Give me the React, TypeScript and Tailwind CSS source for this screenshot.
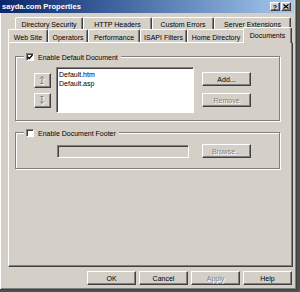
import React from "react";

const raised =
  "bg-[#d4d0c8] border border-t-white border-l-white border-r-[#404040] border-b-[#404040] shadow-[inset_-1px_-1px_0_#808080]";
const sunken =
  "border border-t-[#808080] border-l-[#808080] border-r-white border-b-white shadow-[inset_1px_1px_0_#404040]";
const disabledText = "text-[#808080] [text-shadow:1px_1px_0_#ffffff]";

function Button({
  label,
  w,
  disabled,
}: {
  label: string;
  w: string;
  disabled?: boolean;
}) {
  return (
    <div
      className={`${raised} ${w} h-[14px] flex items-center justify-center pt-[1px] ${
        disabled ? disabledText : "text-black"
      }`}
    >
      {label}
    </div>
  );
}

function Checkbox({ checked }: { checked?: boolean }) {
  return (
    <div className={`${sunken} w-[8px] h-[8px] bg-white flex items-center justify-center`}>
      {checked && (
        <svg width="6" height="6" viewBox="0 0 6 6">
          <path d="M0.5 2.8 L2.2 4.5 L5.5 1" stroke="#000" strokeWidth="1.3" fill="none" />
        </svg>
      )}
    </div>
  );
}

function ArrowBtn({ down }: { down?: boolean }) {
  const d = down
    ? "M4 1.5 V8.5 M1.8 6.2 L4 8.5 L6.2 6.2 M2.5 1.5 H5.5"
    : "M4 8.5 V1.5 M1.8 3.8 L4 1.5 L6.2 3.8 M2.5 8.5 H5.5";
  return (
    <div className={`${raised} w-[17px] h-[15px] flex items-center justify-center`}>
      <svg width="9" height="11" viewBox="0 0 9 11">
        <g transform="translate(1,1)">
          <path d={d} stroke="#ffffff" strokeWidth="1" fill="none" />
        </g>
        <path d={d} stroke="#808080" strokeWidth="1" fill="none" />
      </svg>
    </div>
  );
}

function Tab({ label, w, back }: { label: string; w: string; back?: boolean }) {
  return (
    <div
      className={`${w} h-full flex items-center justify-center ${
        back ? "pt-[2px]" : "pt-[3px]"
      } border-t border-l border-r border-t-white border-l-white border-r-[#404040] rounded-t-[2px] shadow-[inset_-1px_0_0_#808080] text-black`}
    >
      {label}
    </div>
  );
}

function Group({
  label,
  checked,
  className,
  children,
}: {
  label: string;
  checked?: boolean;
  className?: string;
  children: React.ReactNode;
}) {
  return (
    <fieldset
      className={`w-[265px] border border-[#808080] shadow-[1px_1px_0_#ffffff,inset_1px_1px_0_#ffffff] ${className ?? ""}`}
    >
      <legend className="ml-[8px] px-[2px] bg-[#d4d0c8] h-[9px] flex items-center gap-[4px]">
        <Checkbox checked={checked} />
        <span className="pt-[1px] pr-[1px]">{label}</span>
      </legend>
      {children}
    </fieldset>
  );
}

export default function App() {
  return (
    <div className="w-[300px] h-[292px] bg-[#4a524c] [font-family:'Liberation_Sans',Arial,sans-serif] text-[7px] leading-none">
      <div className="w-[297px] h-[290px] bg-[#d4d0c8] flex flex-col border-r border-b border-r-[#404040] border-b-[#404040] shadow-[inset_-1px_-1px_0_#808080]">
        {/* Title bar */}
        <div className="w-[294px] h-[13px] shrink-0 bg-gradient-to-r from-[#0a246a] to-[#a6caf0] flex items-center pl-[2px] pr-[3px]">
          <span className="text-white font-bold text-[7.6px] pt-[1px]">sayda.com Properties</span>
          <div className="ml-auto flex gap-[1px]">
            <div className={`${raised} w-[10px] h-[9px] flex items-center justify-center font-bold text-black text-[7px] pt-[1px]`}>
              ?
            </div>
            <div className={`${raised} w-[10px] h-[9px] flex items-center justify-center`}>
              <svg width="6" height="5" viewBox="0 0 6 5">
                <path d="M0.5 0.5 L5.5 4.5 M5.5 0.5 L0.5 4.5" stroke="#000" strokeWidth="1.2" />
              </svg>
            </div>
          </div>
        </div>

        {/* Body */}
        <div className="flex-1 flex flex-col pl-[8px] pr-[3px] pb-[4px] shadow-[inset_1px_0_0_#ffffff]">
          {/* back row tabs */}
          <div className="mt-[4px] h-[12px] flex ml-[7px]">
            <Tab back label="Directory Security" w="w-[68px]" />
            <Tab back label="HTTP Headers" w="w-[69px]" />
            <Tab back label="Custom Errors" w="w-[62px]" />
            <Tab back label="Server Extensions" w="w-[77px]" />
          </div>
          {/* front row tabs */}
          <div className="h-[13px] flex">
            <Tab label="Web Site" w="w-[40px]" />
            <Tab label="Operators" w="w-[40px]" />
            <Tab label="Performance" w="w-[52px]" />
            <Tab label="ISAPI Filters" w="w-[47px]" />
            <Tab label="Home Directory" w="w-[58px]" />
            <div className="relative z-10 w-[49px] h-[16px] -mt-[2px] -ml-[2px] bg-[#d4d0c8] flex items-center justify-center pb-[1px] border-t border-l border-r border-t-white border-l-white border-r-[#404040] rounded-t-[2px] shadow-[inset_-1px_0_0_#808080] text-black">
              Documents
            </div>
          </div>

          {/* Panel */}
          <div className="h-[225px] border border-t-white border-l-white border-r-[#404040] border-b-[#404040] shadow-[inset_-1px_-1px_0_#808080] pt-[9px] pl-[6px]">
            <Group label="Enable Default Document" checked className="h-[69px]">
              <div className="flex pt-[6px] pl-[18px]">
                <div className="flex flex-col gap-[5px] pt-[6px]">
                  <ArrowBtn />
                  <ArrowBtn down />
                </div>
                <div className={`${sunken} ml-[5px] w-[138px] h-[46px] bg-white pl-[2px] pt-[3px] flex flex-col gap-[1.5px] text-black`}>
                  <span>Default.htm</span>
                  <span>Default.asp</span>
                </div>
                <div className="ml-[8px] flex flex-col gap-[7px] pt-[5px]">
                  <Button label="Add..." w="w-[49px]" />
                  <Button label="Remove" w="w-[49px]" disabled />
                </div>
              </div>
            </Group>

            <Group label="Enable Document Footer" className="h-[41px] mt-[7px]">
              <div className="flex items-start pt-[7px] pl-[41px]">
                <div className={`${sunken} mt-[1px] w-[132px] h-[13px] bg-[#d4d0c8]`} />
                <div className="ml-[13px]">
                  <Button label="Browse..." w="w-[49px]" disabled />
                </div>
              </div>
            </Group>
          </div>

          {/* Bottom buttons */}
          <div className="mt-[4px] flex justify-end gap-[3px] pr-[1px]">
            <Button label="OK" w="w-[49px]" />
            <Button label="Cancel" w="w-[49px]" />
            <Button label="Apply" w="w-[49px]" disabled />
            <Button label="Help" w="w-[49px]" />
          </div>
        </div>
      </div>
    </div>
  );
}
